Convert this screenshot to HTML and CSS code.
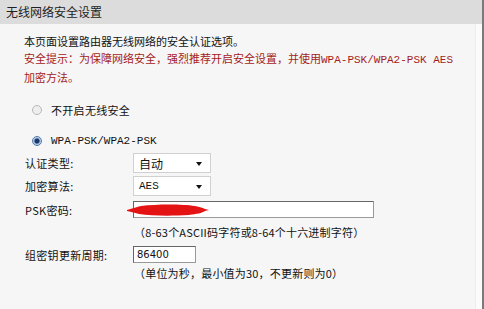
FILE: index.html
```html
<!DOCTYPE html>
<html lang="zh-CN">

<head>
    <meta charset="UTF-8">
    <title>无线网络安全设置</title>
    <link rel="stylesheet" href="styles.css">
</head>

<body>
    <div class="page">
        <div class="title">无线网络安全设置</div>
        <div class="content">
            <p class="intro">本页面设置路由器无线网络的安全认证选项。<br>
                <span class="warn">安全提示：为保障网络安全，强烈推荐开启安全设置，并使用<span class="mono">WPA-PSK/WPA2-PSK AES</span><br>加密方法。</span>
            </p>

            <div class="radio-row first">
                <span class="radio"></span>
                <span>不开启无线安全</span>
            </div>

            <div class="radio-row second">
                <span class="radio checked"></span>
                <span class="mono">WPA-PSK/WPA2-PSK</span>
            </div>

            <div class="field sel1">
                <label>认证类型:</label>
                <div class="select">自动<span class="arrow"></span></div>
            </div>

            <div class="field sel2">
                <label>加密算法:</label>
                <div class="select"><span class="mono">AES</span><span class="arrow"></span></div>
            </div>

            <div class="field psk">
                <label>PSK密码:</label>
                <div class="text-input wide"></div>
                <!-- scribble that hides the password -->
                <svg class="scribble" width="82" height="14" viewBox="0 0 82 14">
                    <path d="M0 7 C6 5 10 4 14 3 C30 1 55 1 68 3 C73 4 76 5 78 6 L82 7 L78 8 C75 10 70 11 62 12 C45 13 25 13 12 11 C8 10 5 9 0 8 Z" fill="#e41414"/>
                </svg>
            </div>
            <div class="hint h1">（8-63个ASCII码字符或8-64个十六进制字符）</div>

            <div class="field group">
                <label>组密钥更新周期:</label>
                <div class="text-input short">86400</div>
            </div>
            <div class="hint h2">（单位为秒，最小值为30，不更新则为0）</div>
        </div>
    </div>
</body>

</html>
```

FILE: styles.css
```css
body {
    margin: 0;
    padding: 0;
    background-color: #f6f6f6;
    font-family: "Noto Sans CJK SC", "Liberation Sans", sans-serif;
    font-size: 11px;
    color: #111;
}

.page {
    width: 484px;
    height: 309px;
    overflow: hidden;
    box-sizing: border-box;
    border-right: 2px solid #7a7a7a;
    background-color: #fbfbfb;
}

.title {
    height: 24px;
    line-height: 24px;
    padding-left: 6px;
    background-color: #dcdcdc;
    font-size: 12px;
    color: #222;
}

.content {
    height: 285px;
    width: 476px;
    box-sizing: border-box;
    padding: 9px 0 0 24px;
    background-color: #f6f6f6;
    border-right: 1px solid #ececec;
    position: relative;
}

.intro {
    margin: 0;
    line-height: 17px;
}

.warn {
    color: #a41c1c;
}

.mono {
    font-family: "Liberation Mono", monospace;
    font-size: 11px;
    letter-spacing: 0;
}

.radio-row {
    display: flex;
    align-items: center;
    height: 18px;
    padding-left: 8px;
    gap: 9px;
    letter-spacing: 0.3px;
}

.radio-row.first {
    margin-top: 15px;
}

.radio-row.second {
    margin-top: 13px;
}

.radio {
    width: 8px;
    height: 8px;
    border-radius: 50%;
    border: 1px solid #b8b8b8;
    background-color: #eeeeee;
    box-sizing: content-box;
}

.radio.checked {
    border-color: #5578a8;
    background: radial-gradient(circle, #1e3660 0, #1e3660 2px, #8fb4e0 3px, #c9dcf2 4px);
}

.field {
    display: flex;
    align-items: center;
    position: relative;
}

.field label {
    width: 109px;
    padding-left: 1px;
    box-sizing: border-box;
    letter-spacing: 0.3px;
}

.sel1 {
    margin-top: 3px;
}

.sel2 {
    margin-top: 3px;
}

.select {
    width: 78px;
    height: 20px;
    box-sizing: border-box;
    border: 1px solid #d0d0d0;
    background-color: #fff;
    padding-left: 5px;
    display: flex;
    align-items: center;
    position: relative;
    font-size: 12px;
}

.arrow {
    position: absolute;
    right: 8px;
    top: 8px;
    width: 0;
    height: 0;
    border-left: 3px solid transparent;
    border-right: 3px solid transparent;
    border-top: 4px solid #111;
}

.psk {
    margin-top: 5px;
}

.text-input {
    height: 17px;
    box-sizing: border-box;
    border: 1px solid #666;
    border-right-color: #999;
    border-bottom-color: #999;
    background-color: #fff;
    font-family: "DejaVu Sans", sans-serif;
    font-size: 10px;
    padding-left: 3px;
    line-height: 15px;
}

.text-input.wide {
    width: 241px;
}

.text-input.short {
    width: 63px;
}

.scribble {
    position: absolute;
    left: 103px;
    top: 2px;
}

.hint {
    height: 16px;
    line-height: 16px;
    padding-left: 110px;
    letter-spacing: 0.2px;
}

.h1 {
    margin-top: 6px;
}

.group {
    margin-top: 6px;
}

.h2 {
    margin-top: 2px;
}
```
